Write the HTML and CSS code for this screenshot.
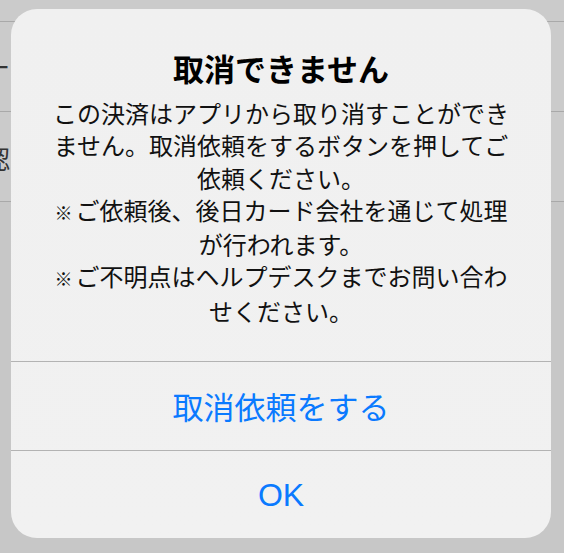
FILE: index.html
```html
<!DOCTYPE html>
<html lang="ja">
<head>
    <meta charset="UTF-8">
    <meta name="viewport" content="width=device-width, initial-scale=1.0">
    <title>取消できません</title>
    <link rel="stylesheet" href="styles.css">
</head>
<body>
    <div id="screen">
        <div class="row row-top"></div>
        <div class="row"><span class="cut dash">ー</span></div>
        <div class="row"><span class="cut word">確認</span></div>
        <div class="rest"></div>
    </div>

    <div id="alert">
        <div id="content">
            <h2 id="title">取消できません</h2>
            <p id="message">この決済はアプリから取り消すことができ<br>ません。取消依頼をするボタンを押してご<br>依頼ください。<br><span class="mark">※</span>ご依頼後、後日カード会社を通じて処理<br>が行われます。<br><span class="mark">※</span>ご不明点はヘルプデスクまでお問い合わ<br>せください。</p>
        </div>
        <button class="action">取消依頼をする</button>
        <button class="action ok">OK</button>
    </div>
</body>
</html>
```

FILE: styles.css
```css
*{
    margin: 0;
    padding: 0;
    box-sizing: border-box;
}
body{
    width: 564px;
    height: 553px;
    overflow: hidden;
    background-color: #cbcbcb;
    font-family: "Noto Sans CJK JP", "Liberation Sans", sans-serif;
    position: relative;
}
#screen{
    display: flex;
    flex-direction: column;
    height: 100%;
}
.row{
    height: 90px;
    border-bottom: 1px solid #a9a9a9;
    display: flex;
    align-items: center;
    overflow: hidden;
}
.row-top{
    height: 22px;
}
.cut{
    font-size: 25px;
    line-height: 30px;
    color: #333;
    flex-shrink: 0;
}
.dash{
    margin-left: -15px;
    margin-top: -2px;
}
.word{
    margin-left: -40px;
    margin-top: 2px;
}
.rest{
    flex: 1;
    background-color: #c7c7c7;
}

/* alert overlay */
#alert{
    position: absolute;
    left: 11px;
    top: 9px;
    width: 540px;
    height: 529px;
    border-radius: 26px;
    background: linear-gradient(180deg, #f0f0f0, #f1f1f1);
    overflow: hidden;
    display: flex;
    flex-direction: column;
}
#content{
    height: 352px;
    padding-top: 40px;
    text-align: center;
    color: #000;
}
#title{
    font-size: 31px;
    line-height: 38px;
    font-weight: 700;
}
#message{
    margin-top: 10px;
    font-size: 24px;
    line-height: 32.3px;
    white-space: nowrap;
    color: #111;
}
.mark{
    font-size: 18px;
    margin-right: 3px;
}
.action{
    height: 89px;
    border: none;
    border-top: 1px solid #b3b3b3;
    background: transparent;
    color: #0a7aff;
    font-family: "Noto Sans CJK JP", "Liberation Sans", sans-serif;
    font-size: 31px;
    line-height: 40px;
    outline: none;
    cursor: pointer;
}
.ok{
    height: 88px;
    font-family: "Liberation Sans", "Noto Sans CJK JP", sans-serif;
    font-size: 32px;
}
```
